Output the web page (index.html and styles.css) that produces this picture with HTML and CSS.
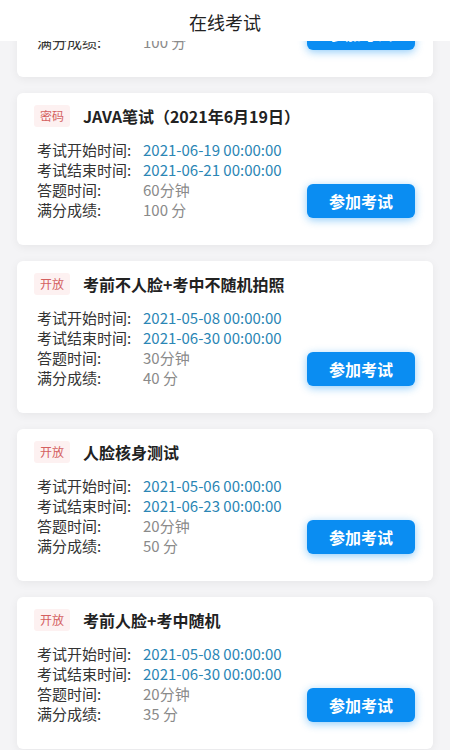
FILE: index.html
```html
<!DOCTYPE html>
<html lang="zh-CN">
<head>
    <meta charset="UTF-8">
    <meta name="viewport" content="width=device-width, initial-scale=1.0">
    <title>在线考试</title>
    <link rel="stylesheet" href="styles.css">
</head>
<body>
    <div class="app">
        <header class="topbar">在线考试</header>
        <div class="list">
            <div class="list-inner">
                <div class="card">
                    <div class="card-head">
                        <span class="tag">开放</span>
                        <span class="card-title">考前人脸测试</span>
                    </div>
                    <div class="card-body">
                        <div class="info">
                            <div class="row"><span class="label">考试开始时间:</span><span class="date">2021-06-01 00:00:00</span></div>
                            <div class="row"><span class="label">考试结束时间:</span><span class="date">2021-06-30 00:00:00</span></div>
                            <div class="row"><span class="label">答题时间:</span><span class="muted">60分钟</span></div>
                            <div class="row"><span class="label">满分成绩:</span><span class="muted">100 分</span></div>
                        </div>
                        <button class="btn">参加考试</button>
                    </div>
                </div>

                <div class="card">
                    <div class="card-head">
                        <span class="tag">密码</span>
                        <span class="card-title">JAVA笔试（2021年6月19日）</span>
                    </div>
                    <div class="card-body">
                        <div class="info">
                            <div class="row"><span class="label">考试开始时间:</span><span class="date">2021-06-19 00:00:00</span></div>
                            <div class="row"><span class="label">考试结束时间:</span><span class="date">2021-06-21 00:00:00</span></div>
                            <div class="row"><span class="label">答题时间:</span><span class="muted">60分钟</span></div>
                            <div class="row"><span class="label">满分成绩:</span><span class="muted">100 分</span></div>
                        </div>
                        <button class="btn">参加考试</button>
                    </div>
                </div>

                <div class="card">
                    <div class="card-head">
                        <span class="tag">开放</span>
                        <span class="card-title">考前不人脸+考中不随机拍照</span>
                    </div>
                    <div class="card-body">
                        <div class="info">
                            <div class="row"><span class="label">考试开始时间:</span><span class="date">2021-05-08 00:00:00</span></div>
                            <div class="row"><span class="label">考试结束时间:</span><span class="date">2021-06-30 00:00:00</span></div>
                            <div class="row"><span class="label">答题时间:</span><span class="muted">30分钟</span></div>
                            <div class="row"><span class="label">满分成绩:</span><span class="muted">40 分</span></div>
                        </div>
                        <button class="btn">参加考试</button>
                    </div>
                </div>

                <div class="card">
                    <div class="card-head">
                        <span class="tag">开放</span>
                        <span class="card-title">人脸核身测试</span>
                    </div>
                    <div class="card-body">
                        <div class="info">
                            <div class="row"><span class="label">考试开始时间:</span><span class="date">2021-05-06 00:00:00</span></div>
                            <div class="row"><span class="label">考试结束时间:</span><span class="date">2021-06-23 00:00:00</span></div>
                            <div class="row"><span class="label">答题时间:</span><span class="muted">20分钟</span></div>
                            <div class="row"><span class="label">满分成绩:</span><span class="muted">50 分</span></div>
                        </div>
                        <button class="btn">参加考试</button>
                    </div>
                </div>

                <div class="card">
                    <div class="card-head">
                        <span class="tag">开放</span>
                        <span class="card-title">考前人脸+考中随机</span>
                    </div>
                    <div class="card-body">
                        <div class="info">
                            <div class="row"><span class="label">考试开始时间:</span><span class="date">2021-05-08 00:00:00</span></div>
                            <div class="row"><span class="label">考试结束时间:</span><span class="date">2021-06-30 00:00:00</span></div>
                            <div class="row"><span class="label">答题时间:</span><span class="muted">20分钟</span></div>
                            <div class="row"><span class="label">满分成绩:</span><span class="muted">35 分</span></div>
                        </div>
                        <button class="btn">参加考试</button>
                    </div>
                </div>
            </div>
        </div>
    </div>
</body>
</html>
```

FILE: styles.css
```css
body {
    font-family: "Noto Sans CJK SC", "Noto Sans", sans-serif;
    background-color: #f4f4f6;
    margin: 0;
    padding: 0;
}

.app {
    height: 750px;
    display: flex;
    flex-direction: column;
    overflow: hidden;
}

.topbar {
    height: 41px;
    flex-shrink: 0;
    background-color: white;
    color: #222;
    font-size: 18px;
    line-height: 44px;
    text-align: center;
    position: relative;
    z-index: 2;
}

.list {
    flex: 1;
    overflow: hidden;
    padding: 0 17px;
}

/* list is scrolled down a bit */
.list-inner {
    margin-top: -116px;
    display: flex;
    flex-direction: column;
    gap: 16px;
}

.card {
    height: 152px;
    box-sizing: border-box;
    background-color: white;
    border-radius: 6px;
    box-shadow: 0 2px 10px rgba(0, 0, 0, 0.06);
    padding: 12px 18px 0 17px;
}

.card-head {
    display: flex;
    align-items: center;
    height: 22px;
}

.tag {
    background-color: #fdf1f1;
    color: #d46060;
    font-size: 12px;
    line-height: 22px;
    padding: 0 6px;
    border-radius: 3px;
    margin-right: 13px;
}

.card-title {
    color: #222;
    font-size: 16px;
    font-weight: bold;
}

.card-body {
    display: flex;
    justify-content: space-between;
    align-items: flex-end;
    margin-top: 13px;
}

.info {
    padding-left: 3px;
}

.row {
    display: flex;
    font-size: 15px;
    line-height: 20px;
    height: 20px;
}

.label {
    width: 106px;
    color: #333;
}

.date {
    color: #2b86b5;
}

.muted {
    color: #8a8a8a;
}

.btn {
    width: 108px;
    height: 34px;
    margin-bottom: 2px;
    background-color: #0a8df2;
    color: white;
    font-family: inherit;
    font-size: 16px;
    font-weight: bold;
    border: none;
    border-radius: 6px;
    box-shadow: 0 2px 8px rgba(10, 141, 242, 0.45);
    cursor: pointer;
}
```
